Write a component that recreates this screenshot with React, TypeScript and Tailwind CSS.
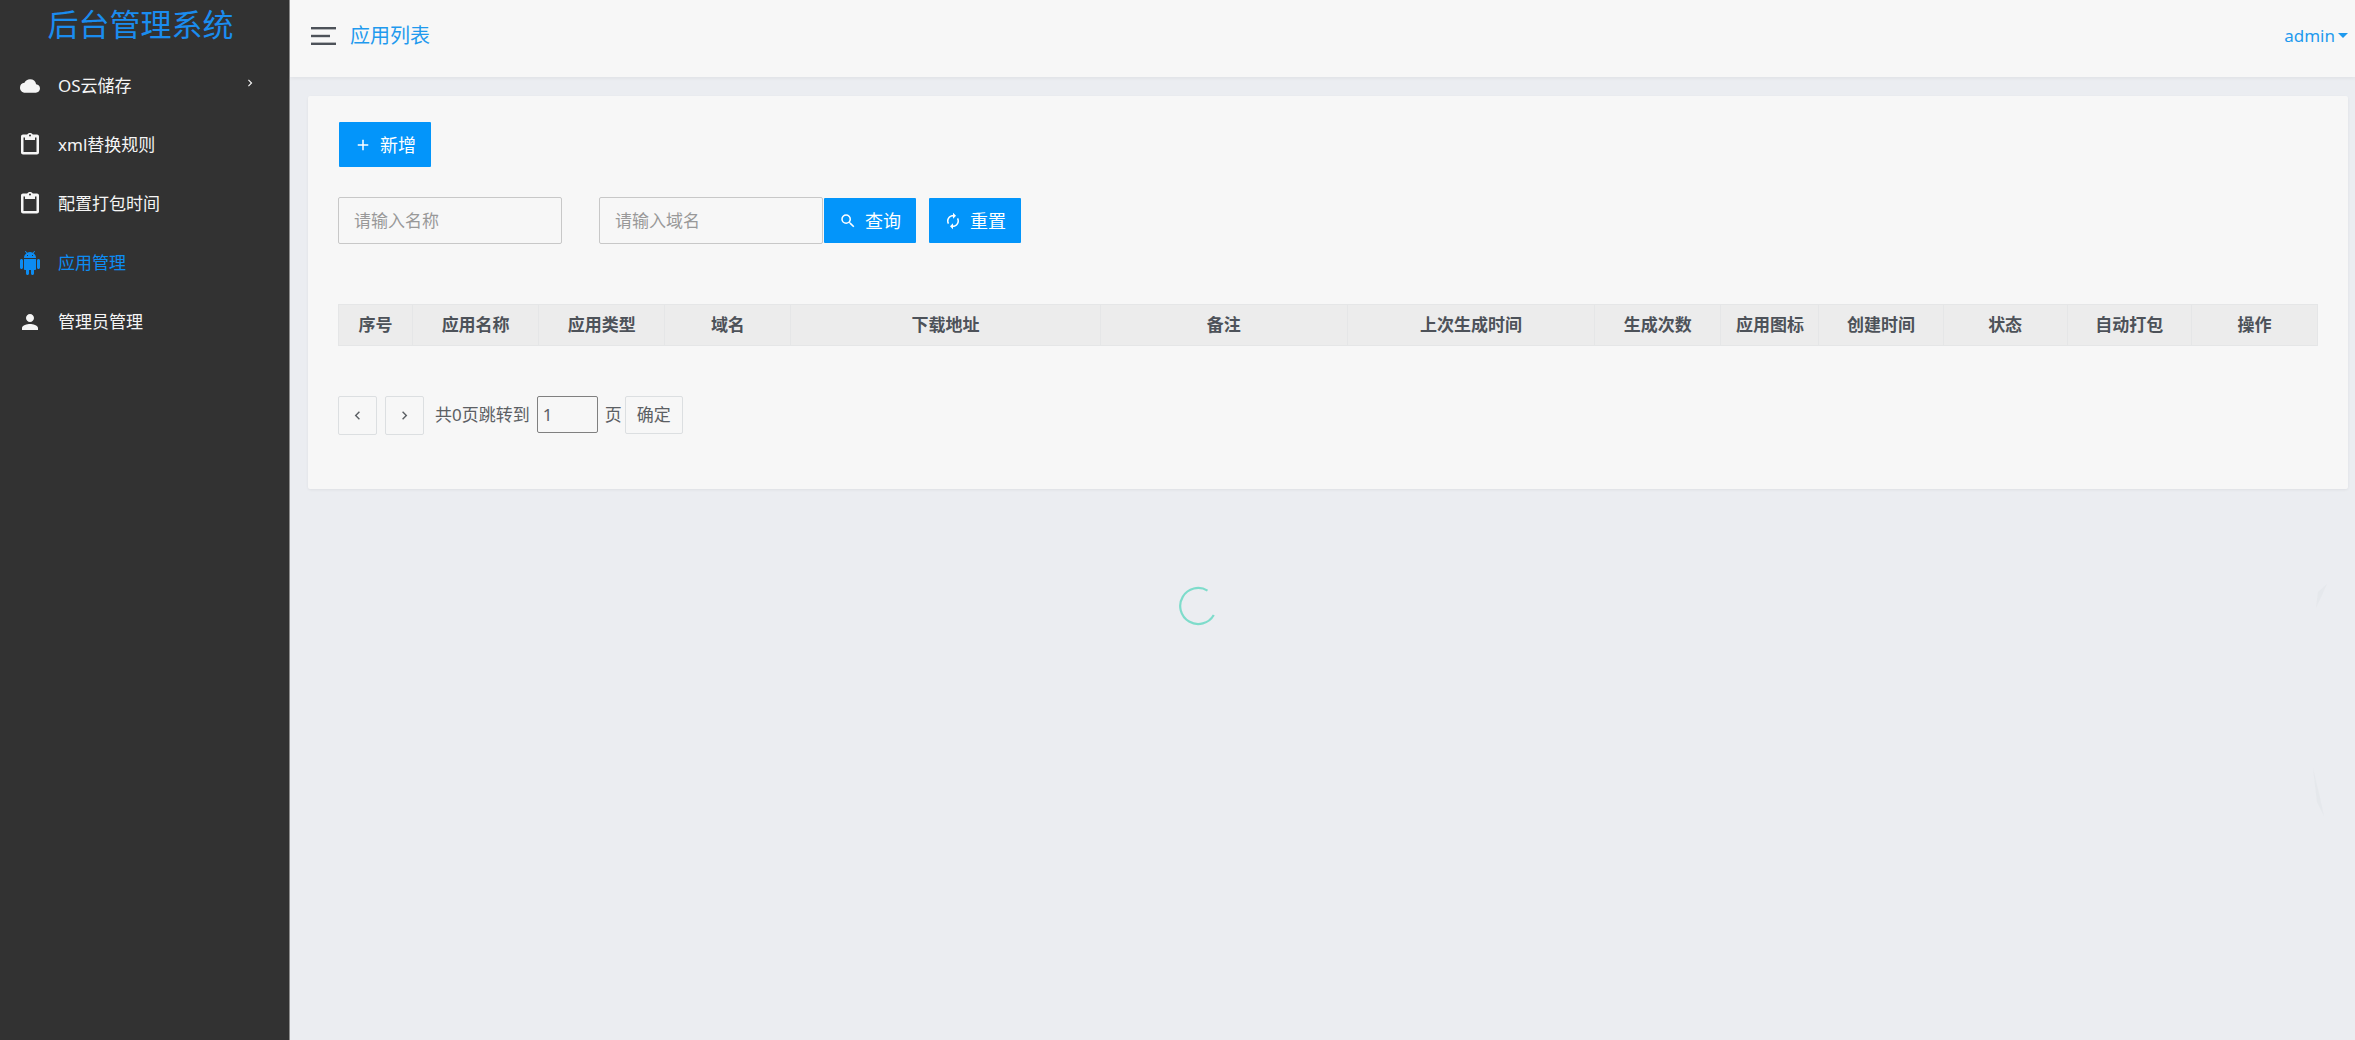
import { ReactNode } from "react";
import {
    MdAdd,
    MdChevronLeft,
    MdChevronRight,
    MdCloud,
    MdPerson,
    MdSearch,
} from "react-icons/md";

type MenuItem = {
    label: string;
    icon: ReactNode;
    active?: boolean;
    hasChildren?: boolean;
};

const ClipboardIcon = () => (
    <svg width="24" height="24" viewBox="0 0 24 24" fill="currentColor">
        <path d="M19 1.5h-4.2C14.4.6 13.3 0 12 0S9.6.6 9.2 1.5H5c-1.1 0-2 .9-2 2v16c0 1.1.9 2 2 2h14c1.1 0 2-.9 2-2v-16c0-1.1-.9-2-2-2zm-7-.1a1 1 0 0 1 0 2 1 1 0 0 1 0-2zM18.500 19h-13V4.500H7V7h10V4.500h1.500z" />
    </svg>
);

const AndroidIcon = () => (
    <svg width="24" height="24" viewBox="0 0 24 24" fill="currentColor">
        <path d="M6 18c0 .55.45 1 1 1h1v3.500c0 .83.67 1.500 1.500 1.500s1.500-.67 1.500-1.500V19h2v3.500c0 .83.67 1.500 1.500 1.500s1.500-.67 1.500-1.500V19h1c.55 0 1-.45 1-1V8H6v10zM3.500 8C2.670 8 2 8.670 2 9.500v7c0 .83.67 1.500 1.500 1.500S5 17.330 5 16.500v-7C5 8.670 4.330 8 3.500 8zm17 0c-.83 0-1.500.67-1.500 1.500v7c0 .83.67 1.500 1.500 1.500s1.500-.67 1.500-1.500v-7c0-.83-.67-1.500-1.500-1.500zm-4.970-5.840l1.300-1.300c.2-.2.2-.51 0-.71-.2-.2-.51-.2-.71 0l-1.480 1.480C13.850 1.230 12.950 1 12 1c-.96 0-1.860.23-2.660.63L7.850.15c-.2-.2-.51-.2-.71 0-.2.2-.2.51 0 .71l1.310 1.310C6.970 3.260 6 5.010 6 7h12c0-1.990-.97-3.750-2.470-4.840zM10 5H9V4h1v1zm5 0h-1V4h1v1z" />
    </svg>
);

const menu: MenuItem[] = [
    { label: "OS云储存", icon: <MdCloud size={20} />, hasChildren: true },
    { label: "xml替换规则", icon: <ClipboardIcon /> },
    { label: "配置打包时间", icon: <ClipboardIcon /> },
    { label: "应用管理", icon: <AndroidIcon />, active: true },
    { label: "管理员管理", icon: <MdPerson size={24} /> },
];

const columns = [
    { title: "序号", width: "w-[74px]" },
    { title: "应用名称", width: "w-[126px]" },
    { title: "应用类型", width: "w-[126px]" },
    { title: "域名", width: "w-[126px]" },
    { title: "下载地址", width: "w-[309px]" },
    { title: "备注", width: "w-[247px]" },
    { title: "上次生成时间", width: "w-[247px]" },
    { title: "生成次数", width: "w-[126px]" },
    { title: "应用图标", width: "w-[98px]" },
    { title: "创建时间", width: "w-[124px]" },
    { title: "状态", width: "w-[124px]" },
    { title: "自动打包", width: "w-[124px]" },
    { title: "操作", width: "w-[126px]" },
];

const App = () => (
    <div className="flex min-h-screen bg-[#ebedf1] font-['Noto_Sans','Noto_Sans_CJK_SC',sans-serif] text-[17px] leading-6 text-[#4d5259]">
        <Sidebar />
        <div className="flex min-w-0 flex-1 flex-col">
            <Header />
            <main className="pt-[19px] pr-[7px] pl-[18px]">
                <section className="rounded-xs bg-[#f7f7f7] px-[30px] pt-[26px] pb-[54px] shadow-[0_1px_3px_rgba(0,0,0,0.06)]">
                    <PrimaryButton icon={<MdAdd size={18} />}>新增</PrimaryButton>
                    <SearchForm />
                    <AppTable />
                    <Pagination />
                </section>
            </main>
        </div>
        <Spinner />
        <Smudges />
    </div>
);

const Sidebar = () => (
    <aside className="w-[290px] shrink-0 border-r border-[#8c8c8c] bg-[#323232]">
        <h1 className="h-[56px] pr-[8px] text-center text-[31px] leading-[48px] text-[#1a8cef]">
            后台管理系统
        </h1>
        <nav>
            <ul>
                {menu.map((item) => (
                    <li key={item.label}>
                        <a
                            href="#"
                            className={`flex h-[59px] items-center pr-[32px] pl-[18px] ${
                                item.active ? "text-[#0d8cf2]" : "text-[#f5f5f5]"
                            }`}
                        >
                            <span className="mr-4 flex w-6 justify-center">{item.icon}</span>
                            {item.label}
                            {item.hasChildren && (
                                <MdChevronRight size={14} className="mb-1.5 ml-auto" />
                            )}
                        </a>
                    </li>
                ))}
            </ul>
        </nav>
    </aside>
);

const Header = () => (
    <header className="flex h-[77px] items-center justify-between bg-[#f7f7f7] pr-[7px] pb-[6px] pl-[21px] text-[#1f9aee] shadow-[0_1px_4px_rgba(0,0,0,0.06)]">
        <div className="flex items-center gap-3.5">
            <button type="button" aria-label="菜单" className="text-[#4d5259]">
                <svg width="25" height="18" viewBox="0 0 25 18" fill="currentColor">
                    <rect width="25" height="2.4" />
                    <rect y="7.8" width="19" height="2.4" />
                    <rect y="15.6" width="25" height="2.4" />
                </svg>
            </button>
            <span className="text-[20px]">应用列表</span>
        </div>
        <button type="button" className="flex items-center gap-[3px]">
            admin
            <svg width="10" height="5" viewBox="0 0 10 5" fill="currentColor">
                <path d="M0 0h10L5 5z" />
            </svg>
        </button>
    </header>
);

const PrimaryButton = ({ icon, children }: { icon: ReactNode; children: ReactNode }) => (
    <button
        type="button"
        className="ml-px flex h-[45px] items-center gap-2 rounded-[1px] bg-[#0395fa] px-[15px] text-[18px] text-white"
    >
        {icon}
        {children}
    </button>
);

const SearchForm = () => (
    <form className="mt-[30px] flex items-center">
        <input
            type="text"
            aria-label="名称"
            placeholder="请输入名称"
            className="mr-[37px] h-[47px] w-[224px] rounded-xs border border-[#c8c8c8] px-[15px] placeholder:text-[#999]"
        />
        <input
            type="text"
            aria-label="域名"
            placeholder="请输入域名"
            className="h-[47px] w-[224px] rounded-xs border border-[#c8c8c8] px-[15px] placeholder:text-[#999]"
        />
        <div className="flex gap-3">
            <PrimaryButton icon={<MdSearch size={18} />}>查询</PrimaryButton>
            <PrimaryButton icon={<ReloadIcon />}>重置</PrimaryButton>
        </div>
    </form>
);

// two facing arrows going round
const ReloadIcon = () => (
    <svg width="18" height="18" viewBox="0 0 24 24" fill="currentColor">
        <path d="M12 6v3l4-4-4-4v3c-4.42 0-8 3.58-8 8 0 1.57.46 3.03 1.24 4.26L6.7 14.8c-.45-.83-.7-1.79-.7-2.8 0-3.31 2.69-6 6-6zm6.76 1.74L17.3 9.2c.44.84.7 1.79.7 2.8 0 3.31-2.69 6-6 6v-3l-4 4 4 4v-3c4.42 0 8-3.58 8-8 0-1.57-.46-3.03-1.24-4.26z" />
    </svg>
);

const AppTable = () => (
    <table className="mt-[60px] w-full table-fixed border-collapse">
        <thead>
            <tr className="h-[41px] bg-[#ececec]">
                {columns.map((column) => (
                    <th
                        key={column.title}
                        className={`border border-[#e5e6e7] p-0 text-center font-bold ${column.width}`}
                    >
                        {column.title}
                    </th>
                ))}
            </tr>
        </thead>
    </table>
);

const Pagination = () => (
    <div className="mt-[50px] flex items-start leading-[37px] text-[#5c6064]">
        <PageButton label="上一页">
            <MdChevronLeft size={17} />
        </PageButton>
        <PageButton label="下一页">
            <MdChevronRight size={17} />
        </PageButton>
        <label htmlFor="page" className="ml-[3px]">
            共0页跳转到
        </label>
        <input
            id="page"
            type="text"
            defaultValue="1"
            className="mr-[7px] ml-[7px] h-[37px] w-[61px] rounded-xs border border-[#808080] px-[5px]"
        />
        页
        <button
            type="button"
            className="ml-[3px] h-[38px] rounded-xs border border-[#dcdfe1] px-[11px] leading-9"
        >
            确定
        </button>
    </div>
);

const PageButton = ({ label, children }: { label: string; children: ReactNode }) => (
    <button
        type="button"
        aria-label={label}
        className="mr-2 flex size-[39px] items-center justify-center rounded-xs border border-[#dcdfe1]"
    >
        {children}
    </button>
);

const Spinner = () => (
    <svg
        className="fixed top-[586px] left-1/2"
        width="40"
        height="40"
        viewBox="0 0 40 40"
        fill="none"
        stroke="#7edccb"
        strokeWidth="2.2"
    >
        <path d="M29.5 4.6A18 18 0 1 0 35.8 29" />
    </svg>
);

// faint marks at the right edge of the backdrop
const Smudges = () => (
    <svg
        aria-hidden="true"
        className="pointer-events-none fixed top-[580px] right-[25px]"
        width="20"
        height="240"
        viewBox="0 0 20 240"
        fill="#e3e6ea"
    >
        <path d="M17 4L8 12L6 28Z" opacity="0.7" />
        <path d="M3 188L10 218L14 236L7 222Z" opacity="0.7" />
    </svg>
);

export default App;
